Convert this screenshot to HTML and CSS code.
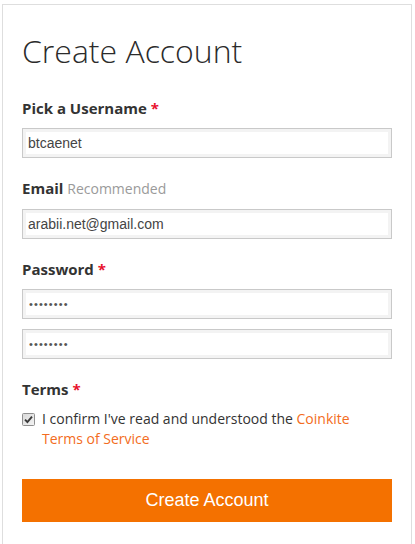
FILE: index.html
```html
<!DOCTYPE html>
<html>
<head>
<meta charset="utf-8">
<link rel="stylesheet" href="styles.css">
</head>
<body>
<div class="card">
  <h1 class="title">Create Account</h1>
  <form class="form">
    <div class="field">
      <label class="label">Pick a Username <span class="req">*</span></label>
      <input class="input" type="text" value="btcaenet">
    </div>
    <div class="field">
      <label class="label">Email <span class="hint">Recommended</span></label>
      <input class="input" type="text" value="arabii.net@gmail.com">
    </div>
    <div class="field">
      <label class="label">Password <span class="req">*</span></label>
      <input class="input input-pass" type="password" value="12345678">
      <input class="input input-pass" type="password" value="12345678">
    </div>
    <div class="field">
      <label class="label">Terms <span class="req">*</span></label>
      <div class="check-row">
        <span class="checkbox"><svg width="13" height="13" viewBox="0 0 13 13"><defs><linearGradient id="g" x1="0" y1="0" x2="1" y2="1"><stop offset="0" stop-color="#d8d8d8"/><stop offset="1" stop-color="#f4f4f4"/></linearGradient></defs><rect x="0.5" y="0.5" width="12" height="12" rx="1" fill="url(#g)" stroke="#8f8f8f"/><path d="M3 6.6 L5.4 9 L10 3.6" fill="none" stroke="#3a3a3a" stroke-width="1.9"/></svg></span>
        <span class="check-text">I confirm I've read and understood the <a class="link" href="#">Coinkite Terms of Service</a></span>
      </div>
    </div>
    <button class="submit" type="button">Create Account</button>
  </form>
</div>
</body>
</html>
```

FILE: styles.css
```css
html, body {
  margin: 0;
  padding: 0;
  background: #fff;
}
body {
  font-family: "Open Sans", "Liberation Sans", sans-serif;
  color: #333;
  overflow: hidden;
}
.card {
  box-sizing: border-box;
  width: 410px;
  margin: 4px 3px 0 2px;
  border: 1px solid #dedede;
  border-bottom: none;
  padding: 25px 19px 60px 19px;
}
.title {
  margin: 0;
  font-family: "Open Sans", sans-serif;
  font-weight: 300;
  font-size: 32px;
  line-height: 42px;
  color: #2b2b2b;
}
.form {
  display: flex;
  flex-direction: column;
  margin-top: 26px;
}
.field {
  display: flex;
  flex-direction: column;
  gap: 10px;
  margin-bottom: 20px;
}
.label {
  font-size: 15px;
  font-weight: 700;
  line-height: 20px;
  color: #333;
}
.req {
  color: #e8112d;
}
.hint {
  font-weight: 400;
  font-size: 14px;
  color: #9a9a9a;
}
.input {
  box-sizing: border-box;
  width: 100%;
  height: 30px;
  margin: 0;
  padding: 0 5px;
  border: 1px solid #c9c9c9;
  box-shadow: inset 0 0 0 3px #f3f3f3;
  background: #fff;
  font-family: "Liberation Sans", Arial, sans-serif;
  font-size: 14px;
  color: #444;
  outline: none;
}
.input-pass {
  font-size: 11px;
  letter-spacing: 1.1px;
  padding-left: 6px;
  color: #555;
}
.check-row {
  display: flex;
  align-items: flex-start;
  gap: 7px;
}
.checkbox {
  flex: none;
  width: 13px;
  height: 13px;
  margin-top: 4px;
  display: flex;
}
.check-text {
  font-size: 14px;
  line-height: 20px;
  color: #333;
}
.link {
  color: #f36c21;
  text-decoration: none;
}
.submit {
  margin-top: 10px;
  height: 43px;
  width: 100%;
  border: none;
  background: #f47100;
  color: #fff;
  font-family: "Liberation Sans", Arial, sans-serif;
  font-size: 18px;
  padding: 0;
}
```
